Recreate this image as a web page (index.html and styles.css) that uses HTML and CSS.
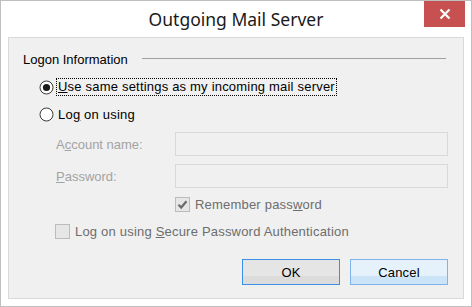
FILE: index.html
```html
<!DOCTYPE html>
<html>
<head>
<meta charset="utf-8">
<link rel="stylesheet" href="styles.css">
</head>
<body>
<div class="window">
  <div class="titlebar">
    <span class="title">Outgoing Mail Server</span>
    <div class="close">
      <svg width="12" height="12" viewBox="0 0 12 12"><path d="M1.5 1.5 L10.5 10.5 M10.5 1.5 L1.5 10.5" stroke="#fff" stroke-width="2.2" fill="none"/></svg>
    </div>
  </div>
  <div class="client">
    <div class="group-head"><span class="group-title">Logon Information</span><span class="rule"></span></div>
    <div class="radio-row r1">
      <svg class="radio" width="15" height="15" viewBox="0 0 15 15"><circle cx="7.5" cy="7.5" r="6.5" fill="#fff" stroke="#3a3a3a" stroke-width="1"/><circle cx="7.5" cy="7.5" r="3.6" fill="#1a1a1a"/></svg>
      <span class="focus"><u>U</u>se same settings as my incoming mail server</span>
    </div>
    <div class="radio-row r2">
      <svg class="radio" width="15" height="15" viewBox="0 0 15 15"><circle cx="7.5" cy="7.5" r="6.5" fill="#fff" stroke="#3a3a3a" stroke-width="1"/></svg>
      <span class="rtext">Lo<u>g</u> on using</span>
    </div>
    <div class="field f1"><span class="flabel">A<u>c</u>count name:</span><div class="input"></div></div>
    <div class="field f2"><span class="flabel"><u>P</u>assword:</span><div class="input"></div></div>
    <div class="check-row remember">
      <span class="box"><svg width="13" height="13" viewBox="0 0 13 13"><path d="M2.5 6.8 L5.2 9.5 L10.5 3.2" stroke="#6b6b6b" stroke-width="2.2" fill="none"/></svg></span>
      <span class="ctext">Remember pass<u>w</u>ord</span>
    </div>
    <div class="check-row spa">
      <span class="box"></span>
      <span class="ctext">Log on using <u>S</u>ecure Password Authentication</span>
    </div>
    <div class="buttons">
      <div class="btn ok">OK</div>
      <div class="btn cancel">Cancel</div>
    </div>
  </div>
</div>
</body>
</html>
```
FILE: styles.css
```css
html, body { margin: 0; padding: 0; background: #fff; }
body { font-family: "Liberation Sans", Arial, sans-serif; font-size: 13px; letter-spacing: 0.2px; color: #000; }
.window {
  width: 472px; height: 307px; box-sizing: border-box;
  border: 1px solid #bfbfbf; background: #fff;
}
.titlebar {
  height: 36px; display: grid; grid-template-columns: 1fr auto 1fr; align-items: start;
}
.title {
  grid-column: 2; font-family: "Noto Sans", "Open Sans", sans-serif; font-size: 17.5px; letter-spacing: 0;
  color: #1a1a1a; padding-top: 7px; line-height: 22px;
}
.close {
  grid-column: 3; justify-self: end; margin-right: 6px;
  width: 41px; height: 26px; background: #c75050;
  display: flex; align-items: center; justify-content: center;
}
.client {
  margin-left: 7px; width: 456px; height: 262px; box-sizing: border-box;
  border: 1px solid #d9d9d9; background: #f0f0f0;
  padding: 0 15px 0 14px; display: flex; flex-direction: column;
}
.group-head { margin-top: 14px; height: 16px; display: flex; align-items: center; }
.group-title { line-height: 16px; color: #000; letter-spacing: 0; }
.rule { flex: 1; height: 1px; background: #a0a0a0; margin-left: 14px; margin-right: 2px; margin-top: -4px; }
.radio-row { height: 18px; display: flex; align-items: center; padding-left: 16px; }
.r1 { margin-top: 10px; }
.r2 { margin-top: 9px; }
.radio { flex: none; }
.focus { margin-left: 3px; outline: 1px dotted #000; line-height: 16px; padding: 0 1px; }
.rtext { margin-left: 4px; }
.field { height: 24px; display: flex; align-items: center; padding-left: 33px; }
.f1 { margin-top: 9px; }
.f2 { margin-top: 8px; }
.flabel { width: 119px; color: #a3a3a3; letter-spacing: 0; }
.input { flex: 1; height: 24px; box-sizing: border-box; border: 1px solid #d9d9d9; background: #f0f0f0; }
.check-row { height: 15px; display: flex; align-items: center; }
.remember { margin-top: 9px; padding-left: 152px; }
.spa { margin-top: 12px; padding-left: 32px; }
.box {
  width: 15px; height: 15px; box-sizing: border-box; border: 1px solid #bcbcbc; background: #e6e6e6;
  display: flex; align-items: center; justify-content: center; flex: none;
}
.ctext { margin-left: 5px; color: #6d6d6d; }
.buttons { margin-top: 20px; display: flex; justify-content: flex-end; gap: 10px; }
.btn {
  width: 98px; height: 26px; box-sizing: border-box; display: flex; align-items: center; justify-content: center;
}
.ok { border: 1px solid #3c8fe6; background: linear-gradient(#e5e5e5 0, #e5e5e5 66%, #dcdcdc 66%); }
.cancel { border: 1px solid #7eb4ea; background: linear-gradient(#e5f1fb 0, #e5f1fb 66%, #cce4f7 66%); }
```
